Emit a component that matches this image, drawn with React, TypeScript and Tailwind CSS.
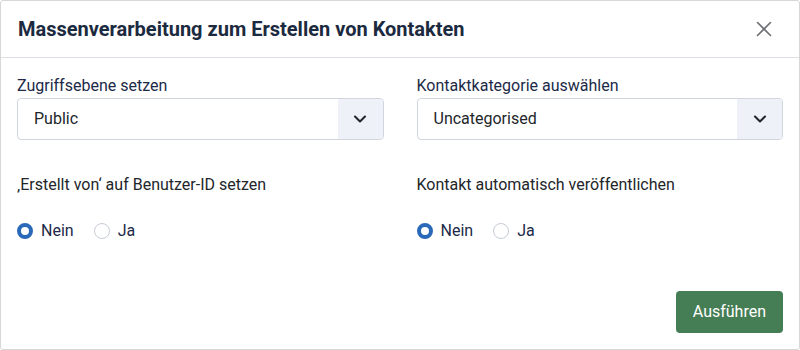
import { ChevronDown, X } from "lucide-react";

const font = { fontFamily: "Roboto, 'Liberation Sans', sans-serif" };

const SelectField = ({ label, value }: { label: string; value: string }) => (
  <div className="flex flex-col">
    <label className="text-[16px] leading-6 text-[#1c2a48]">{label}</label>
    <div className="flex h-[42px] rounded-[4px] border border-[#d1d6de] bg-white overflow-hidden">
      <div className="flex-1 flex items-center pl-4 text-[16px] text-[#22262a]">{value}</div>
      <div className="w-[45px] flex items-center justify-center bg-[#eef2f8]">
        <ChevronDown size={20} strokeWidth={2.5} className="text-[#22262a]" />
      </div>
    </div>
  </div>
);

const RadioGroup = ({ label }: { label: string }) => (
  <div className="flex flex-col">
    <div className="text-[16px] leading-6 text-[#22262a]">{label}</div>
    <div className="flex items-center gap-5 mt-[22px] text-[16px] leading-6 text-[#1c2a48]">
      <label className="flex items-center gap-2">
        <span className="w-4 h-4 rounded-full border-[4px] border-[#2a69b8] bg-white" />
        Nein
      </label>
      <label className="flex items-center gap-2">
        <span className="w-4 h-4 rounded-full border border-[#c6ccd6] bg-white" />
        Ja
      </label>
    </div>
  </div>
);

const App = () => {
  return (
    <div style={font} className="w-[800px] h-[350px] bg-white">
      <div className="h-full flex flex-col border border-[#d7d7d7] rounded-[3px]">
        <div className="h-[57px] flex items-center justify-between px-[17px] border-b border-[#dcdfe3]">
          <h1 className="text-[20px] font-bold text-[#1c2a3f]">Massenverarbeitung zum Erstellen von Kontakten</h1>
          <X size={26} strokeWidth={1.5} className="text-[#6c6f73] mr-[5px]" />
        </div>
        <div className="flex-1 px-[16px] pt-[16px]">
          <div className="grid grid-cols-2 gap-x-[33px]">
            <SelectField label="Zugriffsebene setzen" value="Public" />
            <SelectField label="Kontaktkategorie auswählen" value="Uncategorised" />
          </div>
          <div className="grid grid-cols-2 gap-x-[33px] mt-[33px]">
            <RadioGroup label="‚Erstellt von‘ auf Benutzer-ID setzen" />
            <RadioGroup label="Kontakt automatisch veröffentlichen" />
          </div>
        </div>
        <div className="flex justify-end px-[16px] pb-[16px]">
          <button className="h-[42px] px-[17px] rounded-[4px] bg-[#457d54] text-white text-[16px]">Ausführen</button>
        </div>
      </div>
    </div>
  );
};

export default App;
